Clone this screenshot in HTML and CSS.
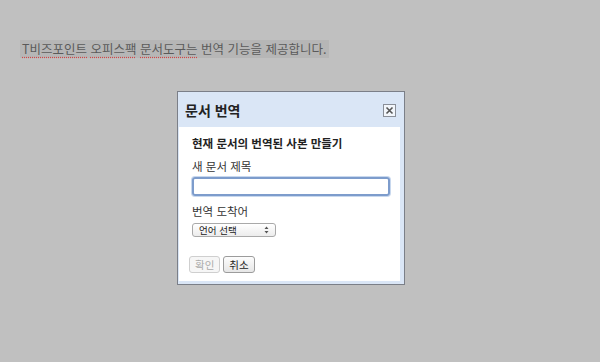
FILE: index.html
```html
<!DOCTYPE html>
<html lang="ko">
<head>
<meta charset="utf-8">
<link rel="stylesheet" href="styles.css">
</head>
<body>
<div class="doc">
  <p class="line"><span class="hl"><span class="sp">T비즈포인트</span> <span class="sp">오피스팩</span> <span class="sp">문서도구는</span> 번역 기능을 제공합니다.</span></p>
</div>
<div class="overlay">
  <div class="dialog">
    <div class="head">
      <span class="title">문서 번역</span>
      <span class="close"><svg width="9" height="9" viewBox="0 0 9 9"><path d="M1.5 1.5L7.5 7.5M7.5 1.5L1.5 7.5" stroke="#555" stroke-width="1.6"/></svg></span>
    </div>
    <div class="body">
      <div class="sub">현재 문서의 번역된 사본 만들기</div>
      <div class="label">새 문서 제목</div>
      <div class="input"></div>
      <div class="label l2">번역 도착어</div>
      <div class="select"><span>언어 선택</span><svg class="arr" width="5" height="8" viewBox="0 0 5 8"><path d="M0.5 3L2.5 0.5L4.5 3ZM0.5 5L2.5 7.5L4.5 5Z" fill="#555"/></svg></div>
      <div class="btns">
        <span class="btn dis">확인</span>
        <span class="btn">취소</span>
      </div>
    </div>
  </div>
</div>
</body>
</html>
```
FILE: styles.css
```css
html, body { margin: 0; padding: 0; }
body {
  width: 600px; height: 362px; background: #c0c0c0;
  font-family: "Noto Sans CJK KR", "Noto Sans", sans-serif;
  position: relative; overflow: hidden;
}
.doc { padding: 40px 0 0 20px; }
.line { margin: 0; font-size: 12.5px; line-height: 18px; color: #5a5a5a; }
.hl { background: #b6b6b6; padding: 0 2px; display: inline-block; }
.sp { text-decoration: underline dotted #d04848; text-underline-offset: 3px; }
.overlay { position: absolute; left: 177px; top: 91px; }
.dialog {
  width: 226px; height: 192px;
  border: 1px solid #7b7f88;
  background: #dae6f6;
  display: flex; flex-direction: column;
}
.head { height: 35px; display: flex; align-items: center; justify-content: space-between; padding: 0 8px 0 7px; }
.title { font-size: 14px; font-weight: bold; color: #222; }
.close {
  width: 11px; height: 11px; border: 1px solid #8a8f98; background: #f2f6fb;
  display: flex; align-items: center; justify-content: center; margin-top: 1px;
}
.close svg { display: block; }
.body {
  flex: 1; background: #fff; margin: 0 4px 3px 1px;
  padding: 8px 0 0 13px; box-sizing: border-box;
}
.sub { font-size: 11.5px; font-weight: bold; color: #222; line-height: 16px; }
.label { font-size: 11.5px; color: #333; line-height: 16px; margin-top: 7px; }
.input {
  width: 194px; height: 15px; margin-top: 3px;
  border: 2px solid #7d9ccc; border-radius: 3px;
  box-shadow: 0 0 0 1px #c8d8ee;
}
.select {
  width: 76px; height: 12px; margin-top: 4px;
  border: 1px solid #a9a9a9; border-radius: 3px;
  background: linear-gradient(#fff, #ececec);
  font-size: 9.5px; line-height: 12px; color: #222;
  display: flex; justify-content: space-between; align-items: center; padding: 0 0 0 6px;
}
.select .arr { margin-right: 6px; }
.btns { display: flex; gap: 3px; margin-top: 19px; margin-left: -3px; }
.btn {
  font-size: 10.5px; line-height: 15px; padding: 0 5px;
  border: 1px solid #9c9c9c; border-radius: 3px;
  background: linear-gradient(#fdfdfd, #e6e6e6);
  color: #222;
}
.btn.dis { color: #aaa; border-color: #cfcfcf; background: #f6f6f6; }
```
